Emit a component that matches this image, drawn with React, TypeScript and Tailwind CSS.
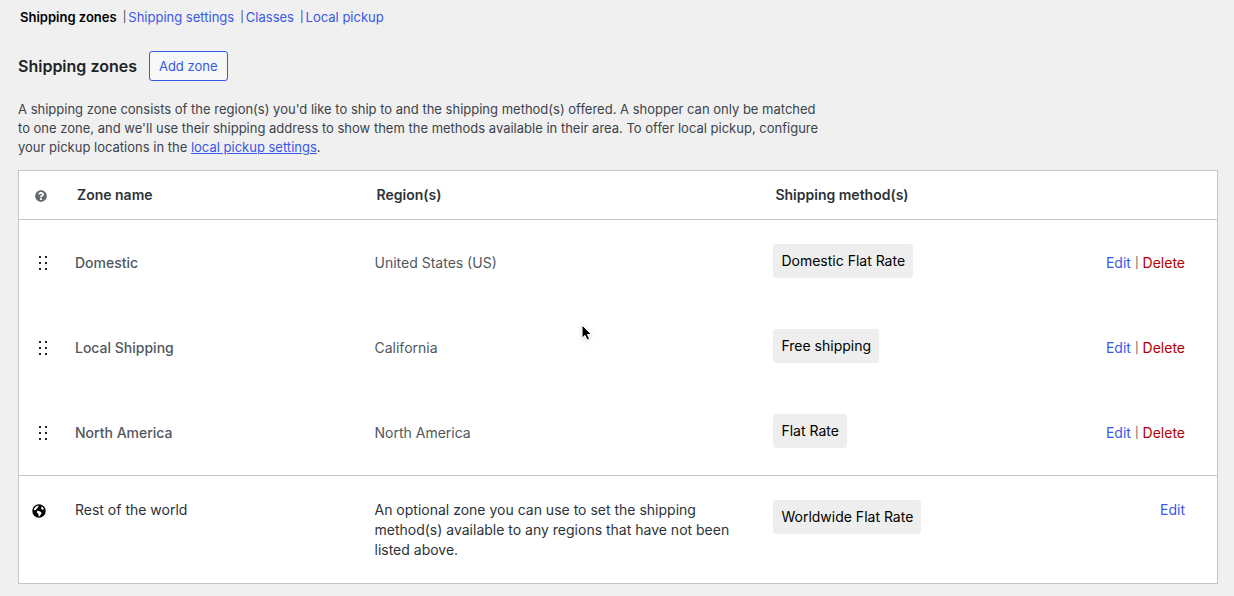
import { FaQuestionCircle } from 'react-icons/fa';

const tabs = [
  { label: 'Shipping settings', href: '#settings' },
  { label: 'Classes', href: '#classes' },
  { label: 'Local pickup', href: '#pickup' },
];

const zones = [
  { name: 'Domestic', region: 'United States (US)', method: 'Domestic Flat Rate' },
  { name: 'Local Shipping', region: 'California', method: 'Free shipping' },
  { name: 'North America', region: 'North America', method: 'Flat Rate' },
];

function DragHandle() {
  return (
    <svg width="10" height="16" viewBox="0 0 10 16" fill="#1d2327" aria-hidden="true">
      {[1, 7, 13].map((y) => (
        <g key={y}>
          <rect x="1" y={y} width="2" height="2" />
          <rect x="7" y={y} width="2" height="2" />
        </g>
      ))}
    </svg>
  );
}

function GlobeIcon() {
  return (
    <svg width="14" height="14" viewBox="0 0 14 14" aria-hidden="true">
      <circle cx="7" cy="7" r="6.7" fill="#000" />
      <path d="M2 4.8 3.8 2.5l2.4-1 .7.7-1.3.9.4.8-1.4.8-.6 1.2-1.1.4L2 6z" fill="#fff" />
      <path d="M4.8 7 6.5 6.7l2.1 1.1 1.1 1.1-.9 1.6-1.2 1.7-.9.2-.2-2.2-1.3-1.2z" fill="#fff" />
      <path d="m8.9 2.3 1.7.8 1.2 1.7-.5 1-1.4-.3-.9-1.1.5-.9z" fill="#fff" />
    </svg>
  );
}

function Cursor() {
  return (
    <svg
      className="absolute left-[47%] top-[323px] pointer-events-none drop-shadow-sm"
      width="14"
      height="20"
      viewBox="0 0 14 20"
      aria-hidden="true"
    >
      <path d="M2 2v13.2l3-2.8 2 4.6 2.5-1.1-2-4.4h4z" fill="#000" stroke="#fff" strokeWidth="1" />
    </svg>
  );
}

function MethodTag({ children }: { children: string }) {
  return <span className="inline-block rounded bg-[#eeeeee] px-2 py-[7px] text-black">{children}</span>;
}

export default function App() {
  return (
    <main className="relative min-h-screen bg-[#f0f0f0] px-4 pt-2 pb-3 font-['Inter',sans-serif] text-[13px] leading-[19px] text-[#3c434a]">
      <nav className="flex pl-1">
        <a href="#zones" className="font-semibold text-black">
          Shipping zones
        </a>
        {tabs.map((tab) => (
          <span key={tab.label} className="flex pl-1.5">
            <span className="text-[11px]">|</span>
            <a href={tab.href} className="pl-0.5 text-[#3858e9]">
              {tab.label}
            </a>
          </span>
        ))}
      </nav>

      <div className="mt-6 ml-0.5 flex items-center gap-3">
        <h2 className="text-[16px] font-semibold text-[#1d2327]">Shipping zones</h2>
        <button className="h-[30px] rounded-[3px] border border-[#3858e9] bg-[#f6f7f7] px-[9px] text-[#3858e9]">
          Add zone
        </button>
      </div>

      <p className="mt-[19px] ml-0.5 max-w-[806px]">
        A shipping zone consists of the region(s) you'd like to ship to and the shipping method(s) offered. A
        shopper can only be matched to one zone, and we'll use their shipping address to show them the methods
        available in their area. To offer local pickup, configure your pickup locations in the{' '}
        <a href="#pickup" className="text-[#3858e9] underline">
          local pickup settings
        </a>
        .
      </p>

      <div className="mt-[13px] ml-0.5 border border-[#c3c4c7] bg-white">
        <table className="w-full table-fixed border-separate border-spacing-0 text-left text-[14px] leading-5">
          <colgroup>
            <col className="w-14" />
            <col className="w-[25%]" />
            <col className="w-[33.3%]" />
            <col />
            <col className="w-[150px]" />
          </colgroup>
          <thead>
            <tr className="h-[49px] text-[#2c3338] [&>th]:border-b [&>th]:border-[#c3c4c7] [&>th]:font-semibold">
              <th className="pt-0.5 pl-4">
                <FaQuestionCircle size={12} className="text-[#646970]" aria-label="Help" />
              </th>
              <th className="pl-0.5">Zone name</th>
              <th className="pl-0.5">Region(s)</th>
              <th className="pl-0.5">Shipping method(s)</th>
              <th />
            </tr>
          </thead>
          <tbody className="text-[#50575e]">
            {zones.map((zone) => (
              <tr key={zone.name} className="h-[85px]">
                <td className="pl-[19px]">
                  <DragHandle />
                </td>
                <td className="font-medium">{zone.name}</td>
                <td>{zone.region}</td>
                <td className="pb-1">
                  <MethodTag>{zone.method}</MethodTag>
                </td>
                <td className="pr-8">
                  <div className="flex justify-end gap-1">
                    <a href="#edit" className="text-[#3858e9]">
                      Edit
                    </a>
                    <span className="text-[11px]">|</span>
                    <a href="#delete" className="text-[#b30000]">
                      Delete
                    </a>
                  </div>
                </td>
              </tr>
            ))}
          </tbody>
          <tfoot className="text-[#2c3338]">
            <tr className="h-[108px] align-top [&>td]:border-t [&>td]:border-[#c3c4c7]">
              <td className="pt-7 pl-[13px]">
                <GlobeIcon />
              </td>
              <td className="pt-6">Rest of the world</td>
              <td className="pt-6 pr-10">
                An optional zone you can use to set the shipping method(s) available to any regions that have not
                been listed above.
              </td>
              <td className="pt-6">
                <MethodTag>Worldwide Flat Rate</MethodTag>
              </td>
              <td className="pt-6 pr-8 text-right">
                <a href="#edit" className="text-[#3858e9]">
                  Edit
                </a>
              </td>
            </tr>
          </tfoot>
        </table>
      </div>
      <Cursor />
    </main>
  );
}
